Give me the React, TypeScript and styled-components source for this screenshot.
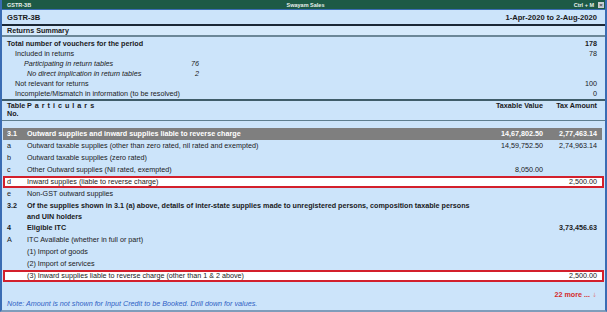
import styled, { createGlobalStyle } from 'styled-components';

const GlobalStyle = createGlobalStyle`
  html, body {
    margin: 0;
    padding: 0;
    background: #ffffff;
  }
  body {
    font-family: "Liberation Sans", Arial, sans-serif;
    color: #1a1a1a;
  }
`;

type Kind = 'section' | 'item' | 'bold' | 'wrap' | 'mark';

interface TableRow {
  no: string;
  text: string;
  taxable?: string;
  tax?: string;
  kind: Kind;
}

const summary = [
  { label: 'Total number of vouchers for the period', value: '178', bold: true, indent: 0 },
  { label: 'Included in returns', value: '78', indent: 8 },
  { label: 'Participating in return tables', mid: '76', italic: true, indent: 17 },
  { label: 'No direct implication in return tables', mid: '2', italic: true, indent: 20 },
  { label: 'Not relevant for returns', value: '100', indent: 8 },
  { label: 'Incomplete/Mismatch in information (to be resolved)', value: '0', indent: 8 },
];

const rows: TableRow[] = [
  { no: '3.1', text: 'Outward supplies and inward supplies liable to reverse charge', taxable: '14,67,802.50', tax: '2,77,463.14', kind: 'section' },
  { no: 'a', text: 'Outward taxable supplies (other than zero rated, nil rated and exempted)', taxable: '14,59,752.50', tax: '2,74,963.14', kind: 'item' },
  { no: 'b', text: 'Outward taxable supplies (zero rated)', kind: 'item' },
  { no: 'c', text: 'Other Outward supplies (Nil rated, exempted)', taxable: '8,050.00', kind: 'item' },
  { no: 'd', text: 'Inward supplies (liable to reverse charge)', tax: '2,500.00', kind: 'mark' },
  { no: 'e', text: 'Non-GST outward supplies', kind: 'item' },
  { no: '3.2', text: 'Of the supplies shown in 3.1 (a) above, details of inter-state supplies made to unregistered persons, composition taxable persons and UIN holders', kind: 'wrap' },
  { no: '4', text: 'Eligible ITC', tax: '3,73,456.63', kind: 'bold' },
  { no: 'A', text: 'ITC Available (whether in full or part)', kind: 'item' },
  { no: '', text: '(1) Import of goods', kind: 'item' },
  { no: '', text: '(2) Import of services', kind: 'item' },
  { no: '', text: '(3) Inward supplies liable to reverse charge (other than 1 & 2 above)', tax: '2,500.00', kind: 'mark' },
];

export default function App() {
  return (
    <>
      <GlobalStyle />
      <Frame>
        <TitleBar>
          <span>GSTR-3B</span>
          <span>Swayam Sales</span>
          <TitleRight>
            Ctrl + M
            <CloseBox>×</CloseBox>
          </TitleRight>
        </TitleBar>

        <Heading>
          <span>GSTR-3B</span>
          <span>1-Apr-2020 to 2-Aug-2020</span>
        </Heading>

        <SubHeading>Returns Summary</SubHeading>

        <Summary>
          {summary.map((s) => (
            <SumRow key={s.label} $bold={s.bold}>
              <SumLabelCell $indent={s.indent} $italic={s.italic}>
                <span>{s.label}</span>
                {s.mid && <span>{s.mid}</span>}
              </SumLabelCell>
              <SumValue>{s.value}</SumValue>
            </SumRow>
          ))}
        </Summary>

        <TableHead>
          <div>
            Table
            <br />
            No.
          </div>
          <HeadTitle>Particulars</HeadTitle>
          <HeadAmount>Taxable Value</HeadAmount>
          <HeadAmount>Tax Amount</HeadAmount>
        </TableHead>

        <Body>
          {rows.map((r, i) => (
            <Row key={i} $kind={r.kind}>
              <div>{r.no}</div>
              <TextCell $kind={r.kind}>{r.text}</TextCell>
              {r.kind !== 'wrap' && (
                <>
                  <Amount>{r.taxable}</Amount>
                  <Amount>{r.tax}</Amount>
                </>
              )}
            </Row>
          ))}
        </Body>

        <Footer>
          <More>
            22 more ... <Arrow>↓</Arrow>
          </More>
          <Note>Note: Amount is not shown for Input Credit to be Booked. Drill down for values.</Note>
        </Footer>
      </Frame>
    </>
  );
}

const Frame = styled.div`
  width: 607px;
  height: 312px;
  box-sizing: border-box;
  background: #cce4fa;
  border-left: 2px solid #3a6cb3;
  border-right: 2px solid #3a6cb3;
  border-bottom: 2px solid #7f9dbb;
  display: flex;
  flex-direction: column;
  overflow: hidden;
  font-size: 7.2px;
`;

const TitleBar = styled.div`
  height: 9px;
  background: #1d5a46;
  border-bottom: 1px solid #3a6cb3;
  color: #e8f0ec;
  font-size: 5.5px;
  font-weight: bold;
  display: grid;
  grid-template-columns: 1fr auto 1fr;
  align-items: center;
  padding: 0 1px 0 5px;
`;

const TitleRight = styled.span`
  justify-self: end;
  display: flex;
  align-items: center;
  gap: 4px;
`;

const CloseBox = styled.span`
  width: 6px;
  height: 6px;
  background: #c9ced3;
  color: #444;
  font-size: 6px;
  line-height: 6px;
  text-align: center;
`;

const Heading = styled.div`
  height: 14px;
  display: flex;
  justify-content: space-between;
  align-items: center;
  padding: 0 8px 0 5px;
  font-size: 7.6px;
  font-weight: bold;
  border-bottom: 2px solid #1b2836;
`;

const SubHeading = styled.div`
  height: 9px;
  line-height: 9px;
  padding: 0 5px;
  font-weight: bold;
  background: #d6eafb;
  border-bottom: 2px solid #6c8898;
`;

const Summary = styled.div`
  padding: 2px 8px 0 5px;
  border-bottom: 2px solid #3f5c69;
`;

const SumRow = styled.div<{ $bold?: boolean }>`
  display: grid;
  grid-template-columns: 192px 1fr;
  height: 10px;
  line-height: 10px;
  font-weight: ${(p) => (p.$bold ? 'bold' : 'normal')};
  white-space: nowrap;
`;

const SumLabelCell = styled.div<{ $indent?: number; $italic?: boolean }>`
  display: flex;
  justify-content: space-between;
  padding-left: ${(p) => p.$indent ?? 0}px;
  font-style: ${(p) => (p.$italic ? 'italic' : 'normal')};
`;

const SumValue = styled.div`
  text-align: right;
`;

const TableHead = styled.div`
  display: grid;
  grid-template-columns: 20px 1fr 80px 54px;
  padding: 1px 8px 2px 5px;
  font-weight: bold;
  line-height: 8px;
  border-bottom: 1px solid #5e7e8f;
`;

const HeadTitle = styled.div`
  letter-spacing: 3px;
`;

const HeadAmount = styled.div`
  text-align: right;
`;

const Body = styled.div`
  padding-top: 7px;
`;

const Row = styled.div<{ $kind: Kind }>`
  display: grid;
  grid-template-columns: 20px 1fr 80px 54px;
  align-items: start;
  line-height: ${(p) => (p.$kind === 'wrap' ? '11px' : '12px')};
  padding: 0 8px 0 5px;
  ${(p) => (p.$kind === 'bold' || p.$kind === 'wrap') && 'font-weight: bold;'}
  ${(p) =>
    p.$kind === 'section' &&
    `
    background: #7f7f7f;
    color: #ffffff;
    font-weight: bold;
    margin: 0 3px 0 1px;
    padding: 0 5px 0 4px;
  `}
  ${(p) =>
    p.$kind === 'mark' &&
    `
    background: #ffffff;
    border: 2px solid #d3202c;
    margin: 0 1px;
    padding: 0 5px 0 2px;
    line-height: 8px;
  `}
`;

const TextCell = styled.div<{ $kind: Kind }>`
  white-space: ${(p) => (p.$kind === 'wrap' ? 'normal' : 'nowrap')};
  ${(p) => p.$kind === 'wrap' && 'grid-column: 2 / 5; max-width: 455px;'}
`;

const Amount = styled.div`
  text-align: right;
  white-space: nowrap;
`;

const Footer = styled.div`
  margin-top: auto;
  padding: 0 8px 2px 5px;
`;

const More = styled.div`
  text-align: right;
  color: #d42a2a;
  font-weight: bold;
`;

const Arrow = styled.span`
  color: #d98a8a;
  font-weight: normal;
  font-family: "DejaVu Sans", sans-serif;
  font-size: 6px;
`;

const Note = styled.div`
  color: #2f5fc4;
  font-style: italic;
`;
